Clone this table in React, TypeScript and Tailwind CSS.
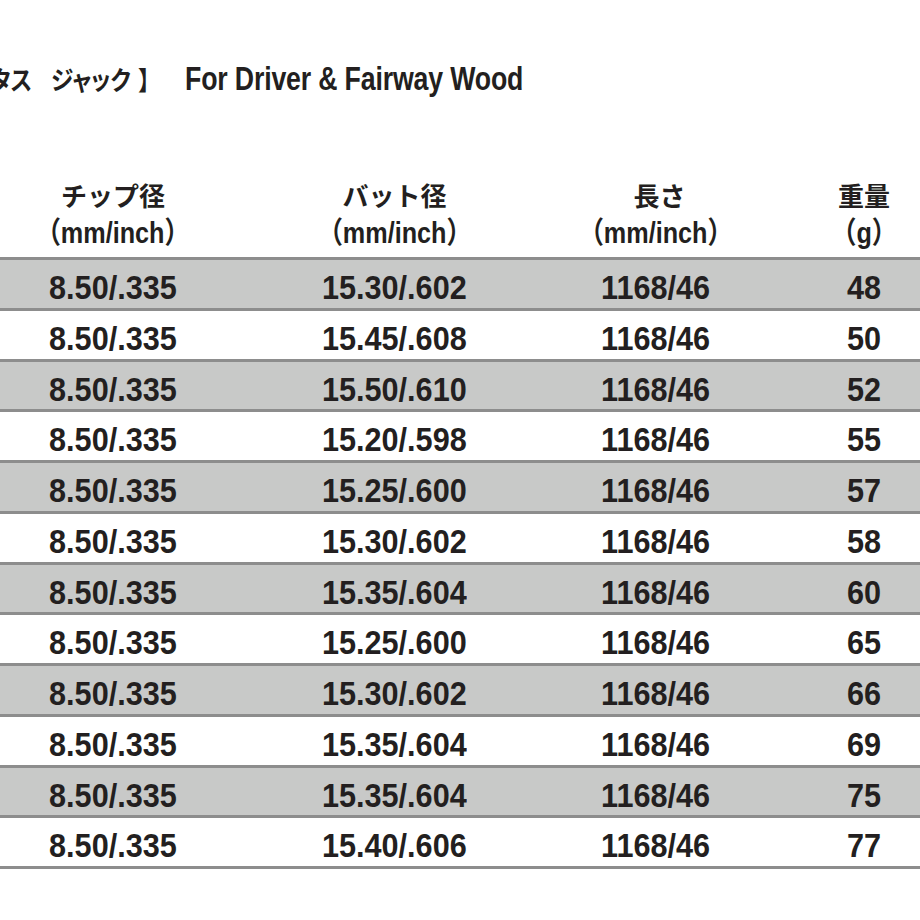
const rows = [
  ["8.50/.335", "15.30/.602", "1168/46", "48"],
  ["8.50/.335", "15.45/.608", "1168/46", "50"],
  ["8.50/.335", "15.50/.610", "1168/46", "52"],
  ["8.50/.335", "15.20/.598", "1168/46", "55"],
  ["8.50/.335", "15.25/.600", "1168/46", "57"],
  ["8.50/.335", "15.30/.602", "1168/46", "58"],
  ["8.50/.335", "15.35/.604", "1168/46", "60"],
  ["8.50/.335", "15.25/.600", "1168/46", "65"],
  ["8.50/.335", "15.30/.602", "1168/46", "66"],
  ["8.50/.335", "15.35/.604", "1168/46", "69"],
  ["8.50/.335", "15.35/.604", "1168/46", "75"],
  ["8.50/.335", "15.40/.606", "1168/46", "77"],
];

const headers = [
  { ja: "チップ径", unit: "（mm/inch）", shift: "" },
  { ja: "バット径", unit: "（mm/inch）", shift: "" },
  { ja: "長さ", unit: "（mm/inch）", shift: "ml-[8px]" },
  { ja: "重量", unit: "（g）", shift: "" },
];

const cols = "grid grid-cols-[226px_337px_185px_232px]";

export default function App() {
  return (
    <div className="w-[920px] h-[920px] overflow-hidden bg-white text-[#231f20] font-['Liberation_Sans','Noto_Sans_CJK_JP',sans-serif] font-bold">
      {/* title, cut off on the left like the source image */}
      <div className="h-[170px] pt-[58px]">
        <div className="flex items-baseline whitespace-nowrap leading-[40px]">
          <div className="w-[195px] ml-[-10px] shrink-0">
            <span className="inline-block origin-left scale-x-[0.87] font-['Noto_Sans_CJK_JP',sans-serif] text-[26px] [font-feature-settings:'palt']">
              <span>タス</span>
              <span className="ml-[22px]">ジャック</span>
              <span className="ml-[9px]">】</span>
            </span>
          </div>
          <span className="inline-block origin-left scale-x-[0.785] text-[34px] tracking-[-0.2px]">
            For Driver &amp; Fairway Wood
          </span>
        </div>
      </div>

      <div className="w-[980px]">
        <div className={`${cols} h-[87px]`}>
          {headers.map((h) => (
            <div key={h.ja} className="flex flex-col items-center pt-[7px]">
              <div className={`font-['Noto_Sans_CJK_JP',sans-serif] text-[26px] leading-[36px] ${h.shift}`}>{h.ja}</div>
              <div className="inline-block scale-x-[0.84] text-[30px] leading-[40px] whitespace-nowrap">{h.unit}</div>
            </div>
          ))}
        </div>

        {rows.map((r, i) => (
          <div
            key={i}
            className={`${cols} h-[50.75px] border-t-[3px] border-[#8d8d8d] ${i % 2 === 0 ? "bg-[#c8c9c8]" : "bg-white"}`}
          >
            {r.map((c, j) => (
              <div key={j} className="flex justify-center pt-[7px]">
                <span className="inline-block scale-x-[0.9] text-[34px] leading-[40px]">{c}</span>
              </div>
            ))}
          </div>
        ))}
        <div className="h-[3px] bg-[#8d8d8d]" />
      </div>
    </div>
  );
}
